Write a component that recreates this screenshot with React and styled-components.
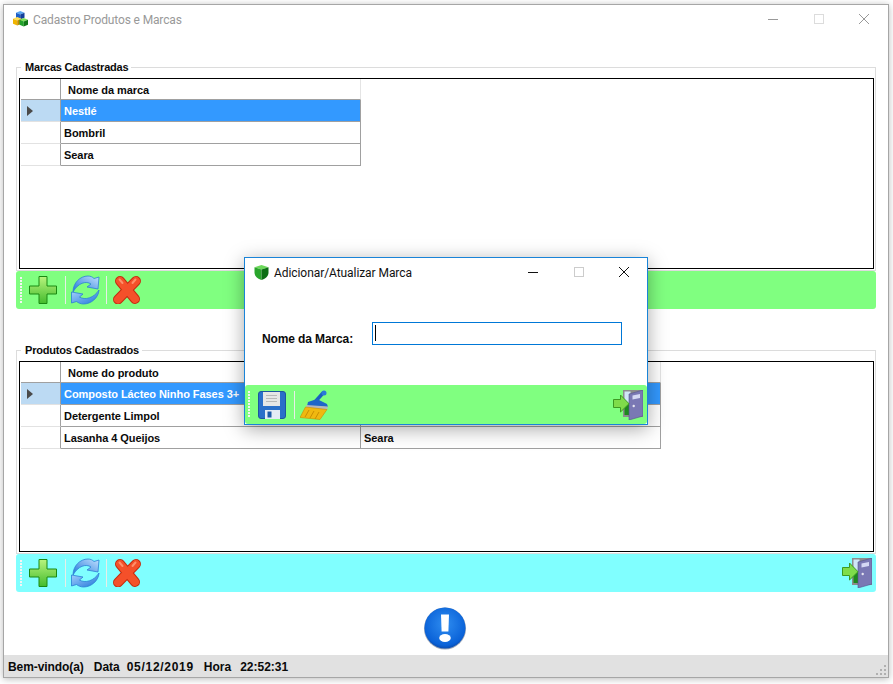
import React from "react";
import styled, { createGlobalStyle } from "styled-components";

const Global = createGlobalStyle`
  html, body { margin: 0; padding: 0; background: #fff; }
  #root { width: 893px; height: 684px; overflow: hidden; }
  * { box-sizing: border-box; }
`;

const Stage = styled.div`
  position: relative;
  width: 893px;
  height: 684px;
  padding: 4px 4px 6px 3px;
  font-family: "Liberation Sans", Arial, sans-serif;
  background: #fff;
`;
const Win = styled.div`
  width: 886px;
  height: 674px;
  display: flex;
  flex-direction: column;
  background: #fff;
  border: 1px solid #a6a6a6;
  box-shadow: 0 1px 7px rgba(0, 0, 0, 0.28);
`;
const TitleBar = styled.div`
  flex: none;
  height: 30px;
  padding-bottom: 2px;
  display: flex;
  align-items: center;
`;
const TitleIconSlot = styled.div`
  flex: none;
  display: flex;
  margin-left: ${(p) => p.$left}px;
  margin-right: ${(p) => p.$right}px;
`;
const TitleText = styled.div`
  font-family: "Roboto", sans-serif;
  font-size: 12px;
  padding-top: 2px;
  letter-spacing: ${(p) => (p.$active ? -0.07 : -0.14)}px;
  color: ${(p) => (p.$active ? "#111" : "#999")};
  white-space: nowrap;
`;
const Controls = styled.div`
  margin-left: auto;
  margin-right: ${(p) => p.$mr}px;
  display: flex;
  height: 100%;
`;
const Ctl = styled.div`
  width: 45.5px;
  display: flex;
  align-items: center;
  justify-content: center;
`;
const Content = styled.div`
  flex: none;
  padding: 32px 0 0 12px;
`;
const Group = styled.div`
  width: 860px;
  height: ${(p) => p.$h}px;
  margin-top: ${(p) => p.$mt || 0}px;
  border: 1px solid #dcdcdc;
  padding: 0 2px 1px 2px;
`;
const Legend = styled.div`
  width: fit-content;
  height: 13px;
  line-height: 13px;
  margin: -7px 0 4px 2px;
  padding: 0 3px 0 4px;
  background: #fff;
  font-size: 11px;
  font-weight: 700;
  letter-spacing: -0.2px;
  color: #0a0a0a;
`;
const GridBox = styled.div`
  width: 855px;
  height: 191px;
  border: 1px solid #000;
  background: #fff;
  font-size: 11px;
  font-weight: 700;
  letter-spacing: -0.06px;
  color: #0a0a0a;
`;
const Row = styled.div`
  display: flex;
  height: ${(p) => (p.$header ? 21 : 22)}px;
`;
const RowHead = styled.div`
  flex: none;
  width: 40px;
  margin-left: 1px;
  display: flex;
  align-items: center;
  padding-left: 6px;
  border-right: 1px solid #a0a0a0;
  border-bottom: 1px solid ${(p) => (p.$header ? "#a0a0a0" : "#e2e2e2")};
  background: ${(p) => (p.$sel ? "#bcdaf3" : "#fff")};
`;
const Arrow = styled.span`
  width: 0;
  height: 0;
  border-style: solid;
  border-width: 5px 0 5px 6px;
  border-color: transparent transparent transparent #4a4a4a;
`;
const Cell = styled.div`
  flex: none;
  width: 300px;
  display: flex;
  align-items: center;
  padding-left: ${(p) => (p.$header ? 7 : 3)}px;
  padding-top: ${(p) => (p.$header ? 2 : 0)}px;
  white-space: nowrap;
  border-right: 1px solid ${(p) => (p.$header ? "#e4e4e4" : "#a0a0a0")};
  border-bottom: 1px solid #a0a0a0;
  background: ${(p) => (p.$sel ? "#3399ff" : "#fff")};
  color: ${(p) => (p.$sel ? "#fff" : "#0a0a0a")};
`;
const Bar = styled.div`
  width: ${(p) => p.$w}px;
  height: ${(p) => p.$h}px;
  flex: none;
  display: flex;
  align-items: center;
  border-radius: 3px;
  background: ${(p) => p.$bg};
`;
const Grip = styled.div`
  flex: none;
  width: 2px;
  height: 27px;
  margin-left: ${(p) => p.$ml}px;
  background: repeating-linear-gradient(to bottom, #f4f4f4 0 2px, transparent 2px 3px);
`;
const IconBtn = styled.div`
  flex: none;
  display: flex;
  margin-left: ${(p) => p.$ml}px;
`;
const EndBtn = styled.div`
  flex: none;
  display: flex;
  margin-left: auto;
  margin-right: 4px;
`;
const Sep = styled.div`
  flex: none;
  width: 1px;
  height: 28px;
  margin-left: ${(p) => p.$ml}px;
  background: #e8eee8;
`;
const InfoZone = styled.div`
  flex: 1;
  display: flex;
  align-items: center;
  justify-content: center;
  padding: 8px 3px 0 0;
`;
const Status = styled.div`
  flex: none;
  height: 22px;
  display: flex;
  align-items: center;
  background: #e1e1e1;
  font-size: 12px;
  font-weight: 700;
  color: #0a0a0a;
  padding: 2px 0 0 4px;
`;
const StatusItem = styled.span`
  margin-left: ${(p) => p.$ml}px;
  letter-spacing: ${(p) => p.$ls || 0}px;
  white-space: nowrap;
`;
const ResizeGrip = styled.div`
  margin-left: auto;
  align-self: flex-end;
  display: flex;
`;
const Dialog = styled.div`
  position: absolute;
  left: 244px;
  top: 257px;
  width: 404px;
  height: 168px;
  display: flex;
  flex-direction: column;
  background: #fff;
  border: 1px solid #1a84d8;
  box-shadow: 0 4px 18px rgba(0, 0, 0, 0.35);
`;
const DialogBody = styled.div`
  flex: 1;
  display: flex;
  align-items: center;
  padding: 0 0 6px 17px;
`;
const FieldLabel = styled.label`
  width: 110px;
  margin-top: 10px;
  font-size: 12px;
  font-weight: 700;
  letter-spacing: -0.12px;
  color: #0a0a0a;
`;
const Input = styled.div`
  width: 250px;
  height: 23px;
  border: 1px solid #0078d7;
  padding: 2px 0 0 2px;
`;
const Caret = styled.div`
  width: 1px;
  height: 16px;
  background: #000;
`;

const PlusIcon = () => (
  <svg width="28" height="28" viewBox="0 0 28 28">
    <defs>
      <linearGradient id="gPlus" x1="0" y1="0" x2="0" y2="1">
        <stop offset="0" stopColor="#b9f47e" />
        <stop offset="1" stopColor="#43bb2c" />
      </linearGradient>
    </defs>
    <path d="M10 .5h8v9.500h9.500v8H18v9.500h-8V18H.5v-8H10z" fill="url(#gPlus)" stroke="#1a8a12" />
  </svg>
);
const RefreshIcon = () => (
  <svg width="30" height="30" viewBox="0 0 30 30">
    <defs>
      <linearGradient id="gRef" x1="0" y1="1" x2="1" y2="0">
        <stop offset="0" stopColor="#1f76d8" />
        <stop offset="1" stopColor="#c2e0ff" />
      </linearGradient>
      <linearGradient id="gRef2" x1="1" y1="1" x2="0" y2="0">
        <stop offset="0" stopColor="#1f76d8" />
        <stop offset="1" stopColor="#a9d3ff" />
      </linearGradient>
    </defs>
    <path d="M3 17C3 8 10 1 18 1c2.500 0 4.500 1 6 2.500L29 2l-1 12-11-2 4-3C16 5.500 8 8 3 17z" fill="url(#gRef)" stroke="#2b7fd6" strokeWidth=".8" />
    <path d="M29 15c-.5 8-8 14-15.500 14-2.500 0-5-1-7-2.500L1.500 28V17L13 19l-3.500 3C15 25.500 24 23 29 15z" fill="url(#gRef2)" stroke="#2b7fd6" strokeWidth=".8" />
  </svg>
);
const XIcon = () => (
  <svg width="28" height="28" viewBox="0 0 28 28">
    <g fill="none" strokeLinecap="round">
      <path d="M7 5l15 18M23 5 5 23.500" stroke="#c42c10" strokeWidth="10" />
      <path d="M7 5l15 18" stroke="#f4522a" strokeWidth="8" />
      <path d="M23 5 5 23.500" stroke="#f4502a" strokeWidth="8" />
      <path d="M6.500 3.500l3 3.500M22.500 3.500 19.500 7" stroke="#ff8f6a" strokeWidth="2" />
    </g>
  </svg>
);
const DoorIcon = () => (
  <svg width="30" height="30" viewBox="0 0 30 30">
    <rect x="10" y="0" width="20" height="27" fill="#8c8c8c" />
    <rect x="11.500" y="1.500" width="6" height="12" fill="#cfe6f7" />
    <rect x="11.500" y="13" width="6" height="12" fill="#1d8a1d" />
    <polygon points="16,4 30,0 30,26 16,30" fill="#7a78b4" stroke="#55548c" strokeWidth=".6" />
    <polygon points="19.500,5.500 27,4 27,8 19.500,9.500" fill="#d5d8f4" />
    <circle cx="20.700" cy="16" r="1.200" fill="#e6e6f0" />
    <polygon points=".5,9.500 7.500,9.500 7.500,5 16,13.700 7.500,22 7.500,17.500 .5,17.500" fill="#7fdc4a" stroke="#3d9a22" />
  </svg>
);
const SaveIcon = () => (
  <svg width="28" height="28" viewBox="0 0 28 28">
    <rect x=".5" y=".5" width="27" height="27" rx="2.500" fill="#2a6fc9" stroke="#1d559f" />
    <rect x="5" y="1" width="17" height="14" fill="#e6e6e6" />
    <path d="M8 4.500h11M8 7.500h11M8 10.500h11" stroke="#b8b8b8" />
    <rect x="7" y="19" width="15" height="9" fill="#e4ecf6" />
    <rect x="9.500" y="20.500" width="4" height="6" fill="#1d5aa8" />
  </svg>
);
const BroomIcon = () => (
  <svg width="29" height="30" viewBox="0 0 29 30">
    <path d="M23 3 15 12" stroke="#1c5fc0" strokeWidth="3.500" strokeLinecap="round" />
    <circle cx="24" cy="3" r="2.500" fill="#2a78d8" />
    <polygon points="8,12 17,9 27,14 28,17 7,16" fill="#1f66c8" />
    <polygon points="6.500,15 28,16.500 27,20 6,18" fill="#b5b8bc" />
    <polygon points="5.500,17 27,19.500 20,29.500 0,27.500" fill="#f0b810" stroke="#c78a00" strokeWidth=".6" />
    <path d="M9 20 5 27M14 21l-4 7M19 22l-4 7" stroke="#c98e04" />
  </svg>
);
const Cube = ({ x, y, s, top, left, right }) => (
  <g transform={`translate(${x} ${y}) scale(${s})`}>
    <polygon points="0,2 5,0 10,2 5,4" fill={top} />
    <polygon points="0,2 5,4 5,10 0,8" fill={left} />
    <polygon points="10,2 5,4 5,10 10,8" fill={right} />
  </g>
);
const CubesIcon = () => (
  <svg width="15" height="16" viewBox="0 0 15 16">
    <Cube x={3} y={0} s={0.85} top="#5aa6f0" left="#1d5fc8" right="#123f9a" />
    <Cube x={0} y={6} s={0.85} top="#ffe05a" left="#f0b400" right="#c08a00" />
    <Cube x={6.500} y={7} s={0.85} top="#7fe05a" left="#22a32a" right="#107818" />
  </svg>
);
const GreenCube = () => (
  <svg width="15" height="15" viewBox="0 0 15 15">
    <polygon points="7.500,0 14.500,2.200 7.500,4.500 .5,2.200" fill="#6cd85a" />
    <path d="M.5 2.200 7.500 4.500V15C4 14 .8 11.500 .5 8z" fill="#2aa52c" />
    <path d="M14.500 2.200 7.500 4.500V15c3.500-1 6.700-3.500 7-7z" fill="#0c6e14" />
  </svg>
);
const InfoIcon = () => (
  <svg width="44" height="44" viewBox="0 0 44 44">
    <defs>
      <radialGradient id="gInfo" cx=".5" cy=".4" r=".65">
        <stop offset="0" stopColor="#2f8df0" />
        <stop offset=".8" stopColor="#0a62d8" />
        <stop offset="1" stopColor="#0a3f98" />
      </radialGradient>
    </defs>
    <circle cx="22" cy="22.500" r="21" fill="#9aa6b8" />
    <circle cx="22" cy="22" r="20.500" fill="url(#gInfo)" />
    <path d="M18 8.500h8l-.6 17h-6.800z" fill="#fff" />
    <ellipse cx="22" cy="32" rx="5.800" ry="4" fill="#fff" />
  </svg>
);
const Min = ({ c }) => (
  <svg width="10" height="10" viewBox="0 0 10 10"><path d="M0 5.500h10" stroke={c} /></svg>
);
const Max = ({ c }) => (
  <svg width="10" height="10" viewBox="0 0 10 10"><rect x=".5" y=".5" width="9" height="9" fill="none" stroke={c} /></svg>
);
const Close = ({ c }) => (
  <svg width="10" height="10" viewBox="0 0 10 10"><path d="M0 0l10 10M10 0 0 10" stroke={c} /></svg>
);
const WinControls = ({ min, max, close, mr }) => (
  <Controls $mr={mr}>
    <Ctl><Min c={min} /></Ctl>
    <Ctl><Max c={max} /></Ctl>
    <Ctl><Close c={close} /></Ctl>
  </Controls>
);
const GripDots = () => (
  <svg width="12" height="12" viewBox="0 0 12 12" fill="#b0b0b0">
    <rect x="8" y="0" width="2" height="2" />
    <rect x="4" y="4" width="2" height="2" />
    <rect x="8" y="4" width="2" height="2" />
    <rect x="0" y="8" width="2" height="2" />
    <rect x="4" y="8" width="2" height="2" />
    <rect x="8" y="8" width="2" height="2" />
  </svg>
);

const DataGrid = ({ headers, rows }) => (
  <GridBox>
    <Row $header>
      <RowHead $header />
      {headers.map((h) => <Cell $header key={h}>{h}</Cell>)}
    </Row>
    {rows.map((r, i) => (
      <Row key={r[0]}>
        <RowHead $sel={i === 0}>{i === 0 && <Arrow />}</RowHead>
        {r.map((c) => <Cell $sel={i === 0} key={c}>{c}</Cell>)}
      </Row>
    ))}
  </GridBox>
);

const ActionBar = ({ bg, door }) => (
  <Bar $w={860} $h={38} $bg={bg}>
    <Grip $ml={4} />
    <IconBtn $ml={7}><PlusIcon /></IconBtn>
    <Sep $ml={8} />
    <IconBtn $ml={4}><RefreshIcon /></IconBtn>
    <Sep $ml={6} />
    <IconBtn $ml={6}><XIcon /></IconBtn>
    {door && <EndBtn><DoorIcon /></EndBtn>}
  </Bar>
);

export default function App() {
  return (
    <Stage>
      <Global />
      <Win>
        <TitleBar>
          <TitleIconSlot $left={9} $right={5}><CubesIcon /></TitleIconSlot>
          <TitleText>Cadastro Produtos e Marcas</TitleText>
          <WinControls min="#999" max="#dcdcdc" close="#999" mr={1} />
        </TitleBar>
        <Content>
          <Group $h={204}>
            <Legend>Marcas Cadastradas</Legend>
            <DataGrid headers={["Nome da marca"]} rows={[["Nestlé"], ["Bombril"], ["Seara"]]} />
          </Group>
          <ActionBar bg="#80ff80" />
          <Group $h={204} $mt={41}>
            <Legend>Produtos Cadastrados</Legend>
            <DataGrid
              headers={["Nome do produto", "Marca"]}
              rows={[
                ["Composto Lácteo Ninho Fases 3+", "Nestlé"],
                ["Detergente Limpol", "Bombril"],
                ["Lasanha 4 Queijos", "Seara"],
              ]}
            />
          </Group>
          <ActionBar bg="#80ffff" door />
        </Content>
        <InfoZone><InfoIcon /></InfoZone>
        <Status>
          <StatusItem $ml={0} $ls={-0.08}>Bem-vindo(a)</StatusItem>
          <StatusItem $ml={10}>Data</StatusItem>
          <StatusItem $ml={7} $ls={0.7}>05/12/2019</StatusItem>
          <StatusItem $ml={10}>Hora</StatusItem>
          <StatusItem $ml={9}>22:52:31</StatusItem>
          <ResizeGrip><GripDots /></ResizeGrip>
        </Status>
      </Win>
      <Dialog>
        <TitleBar>
          <TitleIconSlot $left={9} $right={5}><GreenCube /></TitleIconSlot>
          <TitleText $active>Adicionar/Atualizar Marca</TitleText>
          <WinControls min="#111" max="#ccc" close="#111" mr={0} />
        </TitleBar>
        <DialogBody>
          <FieldLabel>Nome da Marca:</FieldLabel>
          <Input><Caret /></Input>
        </DialogBody>
        <Bar $w={402} $h={39} $bg="#80ff80">
          <Grip $ml={3} />
          <IconBtn $ml={8}><SaveIcon /></IconBtn>
          <Sep $ml={8} />
          <IconBtn $ml={5}><BroomIcon /></IconBtn>
          <EndBtn><DoorIcon /></EndBtn>
        </Bar>
      </Dialog>
    </Stage>
  );
}
